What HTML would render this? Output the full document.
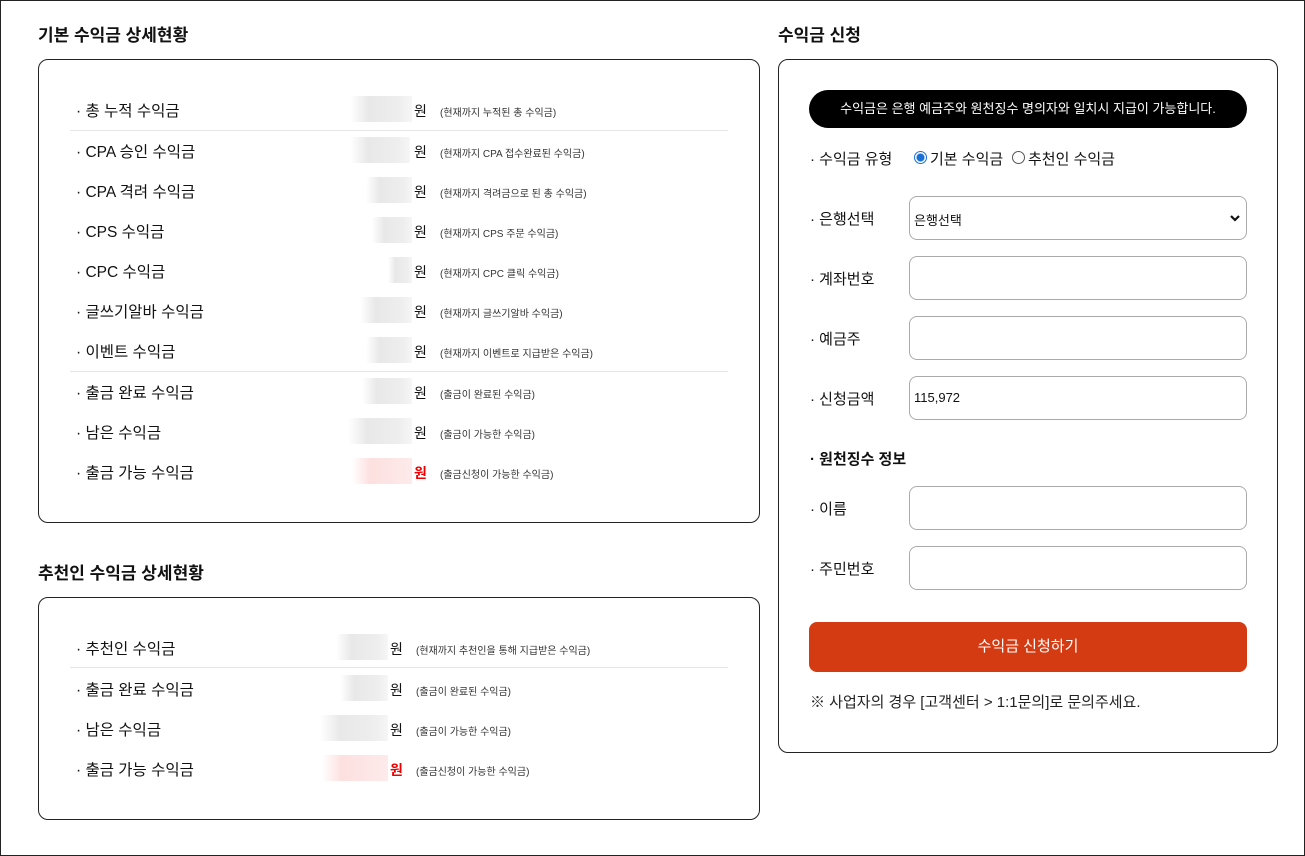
<!DOCTYPE html>
<html><head><meta charset="utf-8"><style>
*{box-sizing:border-box;margin:0;padding:0}
body{width:1305px;height:856px;position:relative;background:#fff;font-family:"Liberation Sans","Noto Sans CJK KR",sans-serif;color:#111;overflow:hidden}
.frame{position:absolute;left:0;top:0;width:1305px;height:856px;border:1px solid #222}
.a{position:absolute;white-space:nowrap}
.t{font-size:17px;font-weight:bold}
.box{position:absolute;border:1px solid #222;border-radius:10px}
.lab{font-size:15.5px;left:76px}
.blur{position:absolute;height:26px;background:linear-gradient(90deg,#fff,#e8e8e8 30%,#eee 80%,#f6f6f6)}
.red{background:linear-gradient(90deg,#fff,#fde0e0 30%,#fdeaea)}
.w{font-size:14px}
.n{font-size:10px;color:#333}
.sep{position:absolute;height:1px;background:#e6e6e6;left:70px;width:658px}
.rl{font-size:15px;left:810px}
.inp{position:absolute;left:909px;width:338px;height:44px;border:1px solid #aaa;border-radius:8px;font-size:13px;padding:13px 4px}
</style></head><body>
<div class="frame"></div>
<div class="a t" style="left:38px;top:21px">기본 수익금 상세현황</div>
<div class="box" style="left:38px;top:59px;width:722px;height:464px"></div>
<div class="sep" style="top:130px"></div><div class="sep" style="top:371px"></div>

<div class="a lab" style="top:99px">· 총 누적 수익금</div><div class="blur" style="left:350px;width:62px;top:96px"></div><div class="a w" style="left:414px;top:101px">원</div><div class="a n" style="left:440px;top:104px">(현재까지 누적된 총 수익금)</div>
<div class="a lab" style="top:140px">· CPA 승인 수익금</div><div class="blur" style="left:350px;width:60px;top:137px"></div><div class="a w" style="left:414px;top:142px">원</div><div class="a n" style="left:440px;top:145px">(현재까지 CPA 접수완료된 수익금)</div>
<div class="a lab" style="top:180px">· CPA 격려 수익금</div><div class="blur" style="left:366px;width:46px;top:177px"></div><div class="a w" style="left:414px;top:182px">원</div><div class="a n" style="left:440px;top:185px">(현재까지 격려금으로 된 총 수익금)</div>
<div class="a lab" style="top:220px">· CPS 수익금</div><div class="blur" style="left:372px;width:40px;top:217px"></div><div class="a w" style="left:414px;top:222px">원</div><div class="a n" style="left:440px;top:225px">(현재까지 CPS 주문 수익금)</div>
<div class="a lab" style="top:260px">· CPC 수익금</div><div class="blur" style="left:388px;width:24px;top:257px"></div><div class="a w" style="left:414px;top:262px">원</div><div class="a n" style="left:440px;top:265px">(현재까지 CPC 클릭 수익금)</div>
<div class="a lab" style="top:300px">· 글쓰기알바 수익금</div><div class="blur" style="left:360px;width:52px;top:297px"></div><div class="a w" style="left:414px;top:302px">원</div><div class="a n" style="left:440px;top:305px">(현재까지 글쓰기알바 수익금)</div>
<div class="a lab" style="top:340px">· 이벤트 수익금</div><div class="blur" style="left:366px;width:46px;top:337px"></div><div class="a w" style="left:414px;top:342px">원</div><div class="a n" style="left:440px;top:345px">(현재까지 이벤트로 지급받은 수익금)</div>
<div class="a lab" style="top:381px">· 출금 완료 수익금</div><div class="blur" style="left:362px;width:50px;top:378px"></div><div class="a w" style="left:414px;top:383px">원</div><div class="a n" style="left:440px;top:386px">(출금이 완료된 수익금)</div>
<div class="a lab" style="top:421px">· 남은 수익금</div><div class="blur" style="left:348px;width:64px;top:418px"></div><div class="a w" style="left:414px;top:423px">원</div><div class="a n" style="left:440px;top:426px">(출금이 가능한 수익금)</div>
<div class="a lab" style="top:461px">· 출금 가능 수익금</div><div class="blur red" style="left:352px;width:60px;top:458px"></div><div class="a w" style="left:414px;top:463px;color:#e00;font-weight:bold">원</div><div class="a n" style="left:440px;top:466px">(출금신청이 가능한 수익금)</div>

<div class="a t" style="left:38px;top:559px">추천인 수익금 상세현황</div>
<div class="box" style="left:38px;top:597px;width:722px;height:223px"></div>
<div class="sep" style="top:667px"></div>
<div class="a lab" style="top:637px">· 추천인 수익금</div><div class="blur" style="left:336px;width:52px;top:634px"></div><div class="a w" style="left:390px;top:639px">원</div><div class="a n" style="left:416px;top:642px">(현재까지 추천인을 통해 지급받은 수익금)</div>
<div class="a lab" style="top:678px">· 출금 완료 수익금</div><div class="blur" style="left:340px;width:48px;top:675px"></div><div class="a w" style="left:390px;top:680px">원</div><div class="a n" style="left:416px;top:683px">(출금이 완료된 수익금)</div>
<div class="a lab" style="top:718px">· 남은 수익금</div><div class="blur" style="left:320px;width:68px;top:715px"></div><div class="a w" style="left:390px;top:720px">원</div><div class="a n" style="left:416px;top:723px">(출금이 가능한 수익금)</div>
<div class="a lab" style="top:758px">· 출금 가능 수익금</div><div class="blur red" style="left:322px;width:66px;top:755px"></div><div class="a w" style="left:390px;top:760px;color:#e00;font-weight:bold">원</div><div class="a n" style="left:416px;top:763px">(출금신청이 가능한 수익금)</div>

<div class="a t" style="left:778px;top:21px">수익금 신청</div>
<div class="box" style="left:778px;top:59px;width:500px;height:694px"></div>
<div class="a" style="left:809px;top:90px;width:438px;height:38px;background:#000;border-radius:19px;color:#fff;font-size:13px;text-align:center;line-height:38px">수익금은 은행 예금주와 원천징수 명의자와 일치시 지급이 가능합니다.</div>
<div class="a rl" style="top:148px">· 수익금 유형</div>
<div class="a" style="left:914px;top:151px;width:13px;height:13px;border-radius:50%;border:1px solid #1a6fd6;background:radial-gradient(#1a6fd6 3.5px,#fff 4.5px)"></div>
<div class="a" style="left:930px;top:148px;font-size:15px">기본 수익금</div>
<div class="a" style="left:1012px;top:151px;width:13px;height:13px;border-radius:50%;border:1px solid #555"></div>
<div class="a" style="left:1028px;top:148px;font-size:15px">추천인 수익금</div>
<div class="a rl" style="top:208px">· 은행선택</div>
<div class="inp" style="top:196px;height:44px">은행선택<svg style="position:absolute;right:6px;top:17px" width="10" height="8" viewBox="0 0 10 8"><path d="M1 2 L5 6 L9 2" stroke="#111" stroke-width="2.2" fill="none"/></svg></div>
<div class="a rl" style="top:268px">· 계좌번호</div><div class="inp" style="top:256px"></div>
<div class="a rl" style="top:328px">· 예금주</div><div class="inp" style="top:316px"></div>
<div class="a rl" style="top:388px">· 신청금액</div><div class="inp" style="top:376px">115,972</div>
<div class="a rl" style="top:448px;font-weight:bold">· 원천징수 정보</div>
<div class="a rl" style="top:498px">· 이름</div><div class="inp" style="top:486px"></div>
<div class="a rl" style="top:558px">· 주민번호</div><div class="inp" style="top:546px"></div>
<div class="a" style="left:809px;top:622px;width:438px;height:50px;background:#d43b12;border-radius:8px;color:#fff;font-size:15px;text-align:center;line-height:50px">수익금 신청하기</div>
<div class="a" style="left:810px;top:691px;font-size:15px;color:#222">※ 사업자의 경우 [고객센터 &gt; 1:1문의]로 문의주세요.</div>
</body></html>
